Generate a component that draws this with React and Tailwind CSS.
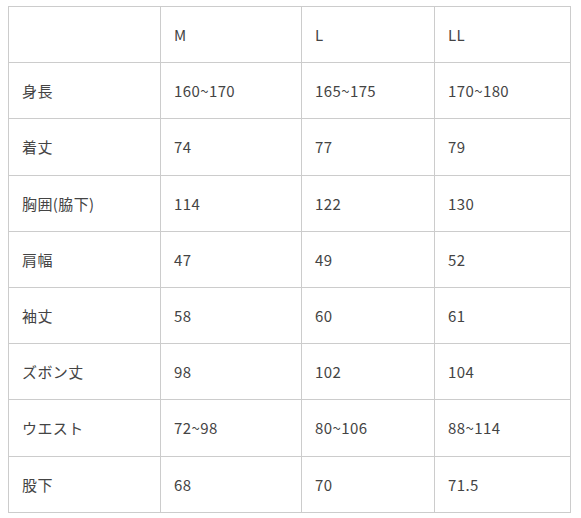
export default function App() {
  const rows = [
    ["", "M", "L", "LL"],
    ["身長", "160~170", "165~175", "170~180"],
    ["着丈", "74", "77", "79"],
    ["胸囲(脇下)", "114", "122", "130"],
    ["肩幅", "47", "49", "52"],
    ["袖丈", "58", "60", "61"],
    ["ズボン丈", "98", "102", "104"],
    ["ウエスト", "72~98", "80~106", "88~114"],
    ["股下", "68", "70", "71.5"],
  ];
  return (
    <div className="pl-[8px] pt-[6px] bg-white min-h-[518px]" style={{ fontFamily: '"Noto Sans CJK JP", "Noto Sans", sans-serif' }}>
      <table className="table-fixed border-collapse w-[562px] text-[15px] leading-[25.2px] tracking-[0.4px] text-[#444]">
        <colgroup>
          <col className="w-[152px]" />
          <col className="w-[141px]" />
          <col className="w-[133px]" />
          <col className="w-[136px]" />
        </colgroup>
        <tbody>
          {rows.map((r, i) => (
            <tr key={i}>
              {r.map((c, j) => (
                <td key={j} className="border border-[#ccc] px-[13px] py-[15px] text-left font-normal align-middle">
                  {c}
                </td>
              ))}
            </tr>
          ))}
        </tbody>
      </table>
    </div>
  );
}
